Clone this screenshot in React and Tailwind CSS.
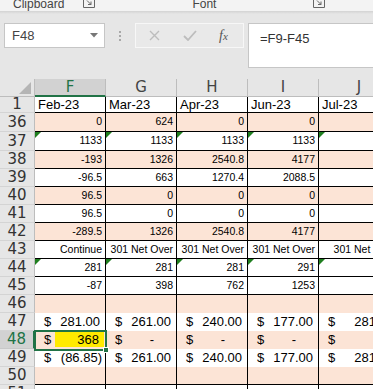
import React from 'react';

const W = ['w-[71px]', 'w-[71px]', 'w-[71px]', 'w-[71px]', 'w-[81px]'];
const LETTERS = ['F', 'G', 'H', 'I', 'J'];

const dataRows = [
  { n: '36', h: 'h-[19px]', pink: true, vals: ['0', '624', '0', '0', ''] },
  { n: '37', h: 'h-[19px]', tri: true, vals: ['1133', '1133', '1133', '1133', ''] },
  { n: '38', h: 'h-[18px]', pink: true, vals: ['-193', '1326', '2540.8', '4177', ''] },
  { n: '39', h: 'h-[18px]', vals: ['-96.5', '663', '1270.4', '2088.5', ''] },
  { n: '40', h: 'h-[18px]', pink: true, vals: ['96.5', '0', '0', '0', ''] },
  { n: '41', h: 'h-[18px]', vals: ['96.5', '0', '0', '0', ''] },
  { n: '42', h: 'h-[18px]', pink: true, vals: ['-289.5', '1326', '2540.8', '4177', ''] },
  { n: '43', h: 'h-[18px]', vals: ['Continue', '301 Net Over', '301 Net Over', '301 Net Over', '301 Net Over'] },
  { n: '44', h: 'h-[18px]', tri: true, vals: ['281', '281', '281', '291', ''] },
  { n: '45', h: 'h-[18px]', vals: ['-87', '398', '762', '1253', ''] },
];

function Tri() {
  return (
    <span className="absolute left-0 top-0 w-0 h-0 border-t-[6px] border-t-[#1f7f1f] border-r-[6px] border-r-transparent" />
  );
}

function RowHead({ n, sel }) {
  return (
    <div
      className={
        sel
          ? "w-[35px] shrink-0 h-full flex items-center justify-center bg-[#d2d2d2] text-[#217346] border-r-2 border-r-[#217346] border-b border-b-[#c8c8c8] font-['DejaVu_Sans',sans-serif] text-[15px]"
          : "w-[35px] shrink-0 h-full flex items-center justify-center bg-[#e6e6e6] text-[#333] border-r border-r-[#bdbdbd] border-b border-b-[#d4d4d4] font-['DejaVu_Sans',sans-serif] text-[15px]"
      }
    >
      {n}
    </div>
  );
}

function Launcher() {
  return (
    <svg width="12" height="9" viewBox="0 0 12 9" className="block">
      <path d="M0.5 0 V8.5 H11.5 V0" fill="none" stroke="#666" strokeWidth="1" />
      <path d="M4 1.5 L8 5.5 M8 2.5 V5.5 H5" fill="none" stroke="#666" strokeWidth="1" />
    </svg>
  );
}

function Acct({ w, val, pink, neg, dash }) {
  return (
    <div className={`${w} shrink-0 h-full flex items-center justify-between pl-[9px] border-r border-black text-[13px] ${pink ? 'bg-[#fce4d6]' : 'bg-white'}`}>
      <span>$</span>
      {dash ? (
        <span className="pr-[22px]">-</span>
      ) : val ? (
        <span className={neg ? 'pr-[3px]' : 'pr-[5px]'}>{val}</span>
      ) : null}
    </div>
  );
}

export default function App() {
  return (
    <div className="w-[373px] h-[389px] overflow-hidden bg-[#e6e6e6] font-['Liberation_Sans',Arial,sans-serif] text-black">
      {/* Ribbon bottom strip */}
      <div className="h-[12px] bg-[#f3f3f3] border-b border-[#d6d6d6] overflow-hidden flex items-start text-[12px] leading-[12px] text-[#444]">
        <span className="ml-[13px] -mt-[2px]">Clipboard</span>
        <span className="ml-[19px] -mt-[1px]"><Launcher /></span>
        <span className="ml-[97px] -mt-[2px]">Font</span>
        <span className="ml-[97px] -mt-[1px]"><Launcher /></span>
      </div>
      <div className="h-[2px] bg-gradient-to-b from-[#d9d9d9] to-[#e6e6e6]" />

      {/* Formula bar */}
      <div className="h-[65px] pt-[9px] flex items-start">
        <div className="ml-[4px] w-[101px] h-[25px] bg-white border border-[#c6c6c6] flex items-center justify-between pl-[7px] pr-[6px] text-[13px] text-[#444]">
          <span>F48</span>
          <svg width="8" height="5" viewBox="0 0 8 5"><path d="M0 0 H8 L4 4.5 Z" fill="#777" /></svg>
        </div>
        <div className="ml-[14px] h-[25px] flex flex-col justify-center gap-[2px]">
          <span className="w-[2px] h-[2px] bg-[#a8a8a8]" />
          <span className="w-[2px] h-[2px] bg-[#a8a8a8]" />
          <span className="w-[2px] h-[2px] bg-[#a8a8a8]" />
        </div>
        <div className="ml-[14px] w-[109px] h-[25px] border border-[#f7f7f7] bg-[#e9e9e9] flex items-center">
          <svg width="11" height="11" viewBox="0 0 11 11" className="ml-[13px]">
            <path d="M1 1 L10 10 M10 1 L1 10" stroke="#bdbdbd" strokeWidth="1.4" />
          </svg>
          <svg width="14" height="11" viewBox="0 0 14 11" className="ml-[23px]">
            <path d="M1 6 L5 10 L13 1" fill="none" stroke="#bdbdbd" strokeWidth="1.8" />
          </svg>
          <span className="ml-[22px] font-['Liberation_Serif',serif] italic text-[14px] text-[#555] leading-none">
            f<span className="text-[11px]">x</span>
          </span>
        </div>
        <div className="ml-[4px] flex-1 h-[45px] bg-white border border-[#c6c6c6] border-r-0 pl-[11px] pt-[5px] text-[13px] text-[#333]">
          =F9-F45
        </div>
      </div>

      {/* Column headers */}
      <div className="flex h-[18px]">
        <div className="w-[35px] shrink-0 h-full bg-[#e6e6e6] border-r border-[#bdbdbd] border-b border-b-[#bdbdbd] relative">
          <svg width="14" height="14" viewBox="0 0 14 14" className="absolute right-[2px] bottom-[1px]">
            <path d="M13 1 V13 H1 Z" fill="#b5b5b5" />
          </svg>
        </div>
        {LETTERS.map((l, i) => (
          <div
            key={l}
            className={
              i === 0
                ? `${W[i]} shrink-0 h-full flex items-center justify-center bg-[#d2d2d2] text-[#217346] border-r border-r-[#bdbdbd] border-b-2 border-b-[#217346] font-['DejaVu_Sans',sans-serif] text-[15px]`
                : `${W[i]} shrink-0 h-full flex items-center justify-center bg-[#e6e6e6] text-[#444] border-r border-r-[#bdbdbd] border-b border-b-[#bdbdbd] font-['DejaVu_Sans',sans-serif] text-[15px]`
            }
          >
            {l}
          </div>
        ))}
      </div>

      {/* Row 1 */}
      <div className="flex h-[16px]">
        <RowHead n="1" />
        {['Feb-23', 'Mar-23', 'Apr-23', 'Jun-23', 'Jul-23'].map((v, i) => (
          <div key={i} className={`${W[i]} shrink-0 h-full flex items-center pl-[3px] bg-white border-r border-b border-black text-[13px] whitespace-nowrap`}>
            {v}
          </div>
        ))}
      </div>

      {/* Rows 36-45 */}
      {dataRows.map((r) => (
        <div key={r.n} className={`flex ${r.h}`}>
          <RowHead n={r.n} />
          {r.vals.map((v, i) => (
            <div
              key={i}
              className={`${W[i]} shrink-0 h-full relative flex items-center justify-end pr-[3px] border-r border-b border-black text-[10.5px] whitespace-nowrap ${r.pink ? 'bg-[#fce4d6]' : 'bg-white'}`}
            >
              {r.tri && <Tri />}
              {v}
            </div>
          ))}
        </div>
      ))}

      {/* Row 46 */}
      <div className="flex h-[18px]">
        <RowHead n="46" />
        {W.map((w, i) => (
          <div key={i} className={`${w} shrink-0 h-full bg-[#fce4d6] border-r border-black`} />
        ))}
      </div>

      {/* Row 47 */}
      <div className="flex h-[18px]">
        <RowHead n="47" />
        {['281.00', '261.00', '240.00', '177.00', '281.00'].map((v, i) => (
          <Acct key={i} w={W[i]} val={v} />
        ))}
      </div>

      {/* Row 48 */}
      <div className="flex h-[18px]">
        <RowHead n="48" sel />
        <div className="w-[71px] shrink-0 h-full relative flex items-start pl-[9px] border-r border-black text-[13px] bg-[#fce4d6]">
          <span className="h-full flex items-center">$</span>
          <span className="ml-auto mr-[1px] mt-[1px] w-[49px] h-[15px] bg-[#ffea00] flex items-center justify-end pr-[5px]">368</span>
          <span className="absolute -left-[1px] -top-[1px] -right-[2px] -bottom-[2px] border-2 border-[#217346] z-10" />
          <span className="absolute -right-[4px] -bottom-[4px] w-[6px] h-[6px] bg-[#217346] border border-white z-20" />
        </div>
        <Acct w={W[1]} pink dash />
        <Acct w={W[2]} pink dash />
        <Acct w={W[3]} pink dash />
        <Acct w={W[4]} pink />
      </div>

      {/* Row 49 */}
      <div className="flex h-[18px]">
        <RowHead n="49" />
        {['(86.85)', '261.00', '240.00', '177.00', '281.00'].map((v, i) => (
          <Acct key={i} w={W[i]} val={v} neg={i === 0} />
        ))}
      </div>

      {/* Row 50 */}
      <div className="flex h-[18px]">
        <RowHead n="50" />
        {W.map((w, i) => (
          <div key={i} className={`${w} shrink-0 h-full bg-[#fce4d6] border-r border-b border-black`} />
        ))}
      </div>

      {/* Row 51 (partial) */}
      <div className="flex h-[18px]">
        <RowHead n="51" />
        {W.map((w, i) => (
          <div key={i} className={`${w} shrink-0 h-full bg-white border-r ${i < 4 ? 'border-r-black' : 'border-r-[#d4d4d4]'}`} />
        ))}
      </div>
    </div>
  );
}
